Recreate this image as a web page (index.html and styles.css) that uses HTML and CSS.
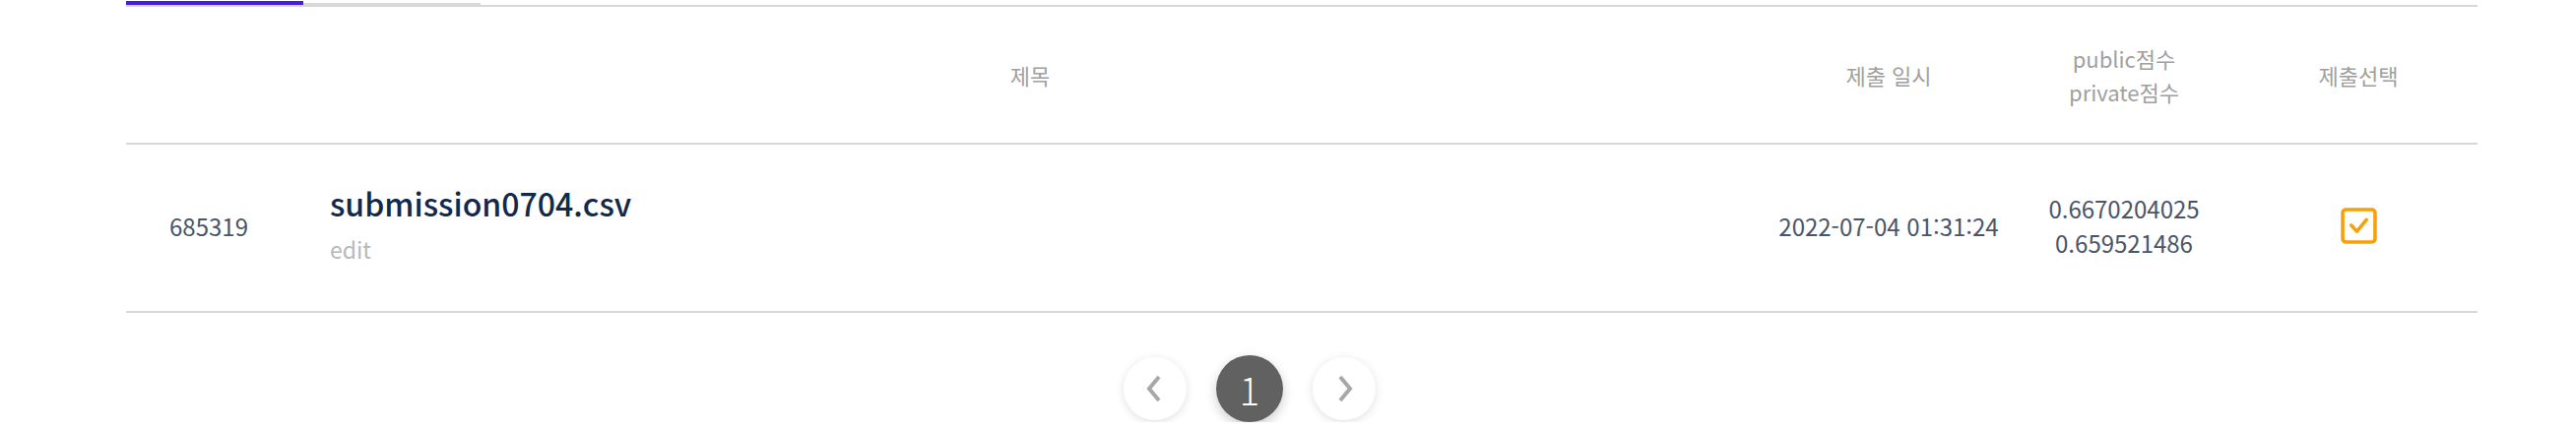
FILE: index.html
```html
<!DOCTYPE html>
<html lang="ko">
<head>
<meta charset="utf-8">
<title>제출 목록</title>
<link rel="stylesheet" href="styles.css">
</head>
<body>
<div class="wrap">
  <div class="tabs">
    <div class="tab tab-active"></div>
    <div class="tab tab-idle"></div>
  </div>
  <div class="table">
    <div class="row head">
      <div class="cell"></div>
      <div class="cell">제목</div>
      <div class="cell">제출 일시</div>
      <div class="cell stack"><span>public점수</span><span>private점수</span></div>
      <div class="cell">제출선택</div>
    </div>
    <div class="row body">
      <div class="cell num">685319</div>
      <div class="cell title">
        <span class="fname">submission0704.csv</span>
        <span class="edit">edit</span>
      </div>
      <div class="cell date">2022-07-04 01:31:24</div>
      <div class="cell stack scores"><span>0.6670204025</span><span>0.659521486</span></div>
      <div class="cell">
        <span class="check">
          <svg viewBox="0 0 36 36" width="37" height="37"><rect x="2" y="2" width="32" height="32" rx="3" fill="none" stroke="#f7a10a" stroke-width="3.5"/><path d="M10.5 17.5 L16 23.5 L25.5 12" fill="none" stroke="#f7a10a" stroke-width="3.5" stroke-linecap="round" stroke-linejoin="round"/></svg>
        </span>
      </div>
    </div>
  </div>
  <div class="pager">
    <button class="pg pg-nav" aria-label="이전">
      <svg viewBox="0 0 30 30" width="30" height="30"><path d="M19 3 L9 15 L19 27" fill="none" stroke="#a8a8a8" stroke-width="4"/></svg>
    </button>
    <button class="pg pg-cur">1</button>
    <button class="pg pg-nav" aria-label="다음">
      <svg viewBox="0 0 30 30" width="30" height="30"><path d="M11 3 L21 15 L11 27" fill="none" stroke="#a8a8a8" stroke-width="4"/></svg>
    </button>
  </div>
</div>
</body>
</html>
```
FILE: styles.css
```css
* { box-sizing: border-box; }
html, body { margin: 0; padding: 0; background: #fff; }
body {
  font-family: "Noto Sans CJK KR", "Noto Sans", sans-serif;
  color: #4a5568;
}
.wrap {
  width: 2388px;
  margin-left: 128px;
  padding-top: 1px;
}
.tabs {
  display: flex;
  align-items: flex-end;
  border-bottom: 2px solid #d8d8d8;
  height: 6px;
}
.tab { width: 180px; }
.tab-active { height: 4px; background: #4a1ce0; }
.tab-idle { height: 2px; background: #d8d8d8; }
.row {
  display: grid;
  grid-template-columns: 168px 1500px 244px 234px 242px;
  border-bottom: 2px solid #d8d8d8;
}
.head { height: 140px; }
.body { height: 171px; }
.cell {
  display: flex;
  flex-direction: column;
  align-items: center;
  justify-content: center;
  text-align: center;
}
.body .cell { padding-bottom: 5px; }
.head .cell {
  font-size: 22px;
  color: #a0a0a0;
  line-height: 34px;
}
.num, .date, .scores { font-size: 24px; color: #4a5568; }
.scores { line-height: 35px; }
.body .title {
  align-items: flex-start;
  padding-left: 39px;
  padding-bottom: 2px;
}
.fname {
  font-size: 32px;
  font-weight: 500;
  color: #12294a;
  line-height: 45px;
}
.edit {
  font-size: 23px;
  color: #b8b8b8;
  line-height: 48px;
}
.check { display: flex; }
.pager {
  display: flex;
  justify-content: center;
  gap: 30px;
  padding-right: 106px;
  margin-top: 43px;
}
.pg {
  border: none;
  border-radius: 50%;
  display: flex;
  align-items: center;
  justify-content: center;
  font-family: "Noto Sans CJK KR", "Noto Sans", sans-serif;
  padding: 0;
}
.pg-nav {
  width: 64px;
  height: 64px;
  background: #fff;
  box-shadow: 0 2px 10px rgba(0,0,0,0.12);
  margin-top: 2px;
}
.pg-cur {
  width: 68px;
  height: 68px;
  background: #616161;
  color: #fff;
  font-size: 38px;
  font-weight: 300;
  box-shadow: 0 4px 12px rgba(0,0,0,0.2);
}
```
